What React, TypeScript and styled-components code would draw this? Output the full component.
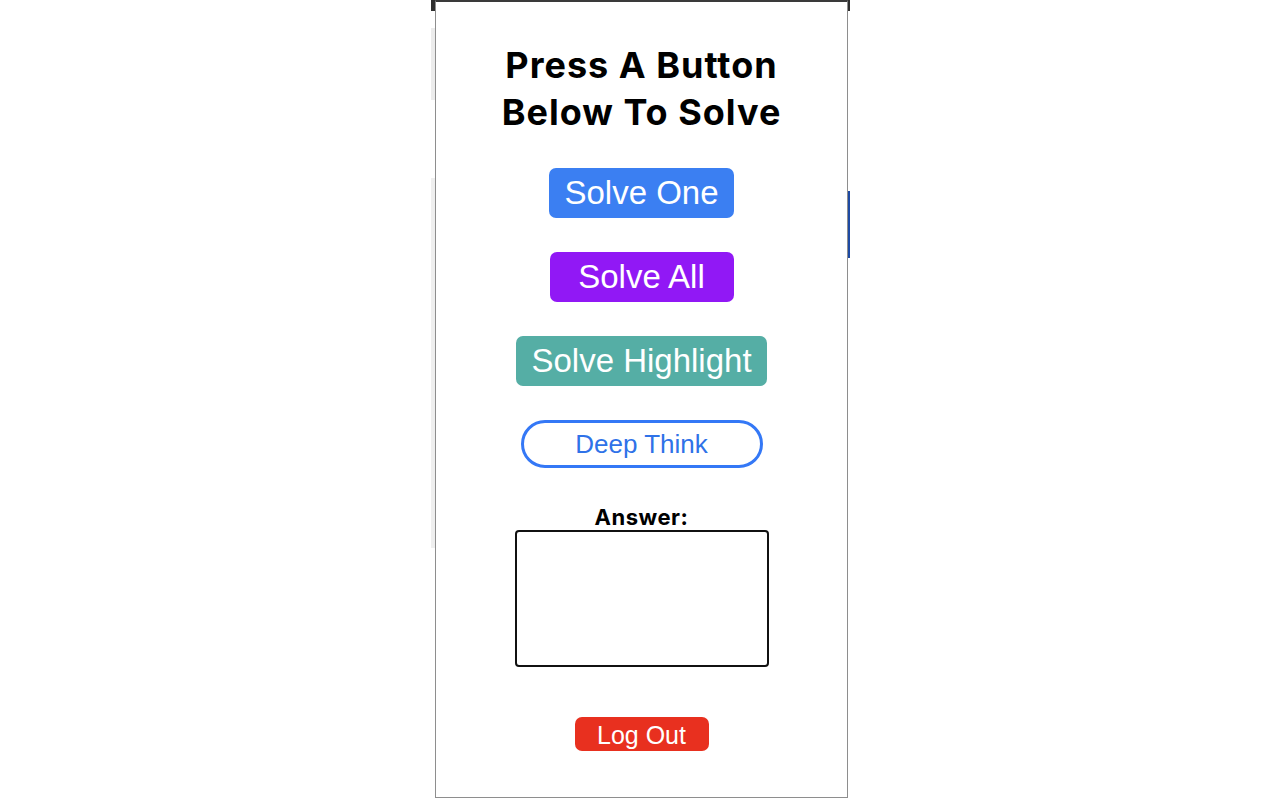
import styled, { createGlobalStyle } from 'styled-components';

const GlobalStyle = createGlobalStyle`
  html, body {
    margin: 0;
    padding: 0;
    background: #ffffff;
  }
  * {
    box-sizing: border-box;
  }
`;

const Stage = styled.div`
  display: flex;
  width: 1280px;
  height: 800px;
  padding-left: 431px;
  overflow: hidden;
`;

// bits of the page behind the popup that show at its edges
const LeftEdge = styled.div`
  width: 4px;
  height: 800px;
  background: linear-gradient(
    to bottom,
    #2e2e2e 0 11px,
    #ffffff 11px 28px,
    #ececec 28px 100px,
    #ffffff 100px 178px,
    #efefef 178px 548px,
    #ffffff 548px
  );
`;

const RightEdge = styled.div`
  width: 2px;
  height: 800px;
  background: linear-gradient(
    to bottom,
    #2e2e2e 0 11px,
    #ffffff 11px 191px,
    #1d4aa3 191px 258px,
    #ffffff 258px
  );
`;

const Panel = styled.section`
  width: 413px;
  height: 798px;
  display: flex;
  flex-direction: column;
  align-items: center;
  border: 1px solid #8e8e8e;
  border-top: 2px solid #3a3a3a;
  background: #ffffff;
`;

const Title = styled.h1`
  margin: 40px 0 0;
  font-family: Inter, 'Liberation Sans', sans-serif;
  font-weight: 700;
  font-size: 36px;
  line-height: 47px;
  letter-spacing: 1px;
  text-align: center;
  color: #000000;
`;

const ButtonStack = styled.div`
  margin-top: 32px;
  display: flex;
  flex-direction: column;
  align-items: center;
  gap: 34px;
`;

const SolveButton = styled.button<{ $color: string }>`
  height: 50px;
  min-width: 184px;
  padding: 0 15px;
  border: none;
  border-radius: 7px;
  background: ${({ $color }) => $color};
  color: #ffffff;
  font-family: 'Liberation Sans', Arial, sans-serif;
  font-size: 33px;
  line-height: 50px;
  cursor: pointer;
`;

const OutlineButton = styled.button`
  width: 242px;
  height: 48px;
  border: 3px solid #3478f6;
  border-radius: 24px;
  background: #ffffff;
  color: #2f72e8;
  font-family: 'Liberation Sans', Arial, sans-serif;
  font-size: 26px;
  line-height: 40px;
  cursor: pointer;
`;

const AnswerLabel = styled.label`
  margin-top: 36px;
  font-family: Inter, 'Liberation Sans', sans-serif;
  font-weight: 700;
  font-size: 22px;
  line-height: 26px;
  letter-spacing: 0.5px;
  color: #000000;
`;

const AnswerBox = styled.textarea`
  width: 254px;
  height: 137px;
  border: 2px solid #111111;
  border-radius: 4px;
  resize: none;
  font-family: 'Liberation Sans', Arial, sans-serif;
  font-size: 14px;
  outline: none;
`;

const LogOutButton = styled.button`
  margin-top: 50px;
  width: 134px;
  height: 34px;
  border: none;
  border-radius: 7px;
  background: #e8301f;
  color: #ffffff;
  font-family: 'Liberation Sans', Arial, sans-serif;
  font-size: 25px;
  line-height: 34px;
  cursor: pointer;
`;

const App = () => (
  <>
    <GlobalStyle />
    <Stage>
      <LeftEdge />
      <Panel>
        <Title>
          Press A Button
          <br />
          Below To Solve
        </Title>
        <ButtonStack>
          <SolveButton $color="#3b7ff2">Solve One</SolveButton>
          <SolveButton $color="#9118f5">Solve All</SolveButton>
          <SolveButton $color="#55aea5">Solve Highlight</SolveButton>
          <OutlineButton>Deep Think</OutlineButton>
        </ButtonStack>
        <AnswerLabel htmlFor="answer">Answer:</AnswerLabel>
        <AnswerBox id="answer" readOnly />
        <LogOutButton>Log Out</LogOutButton>
      </Panel>
      <RightEdge />
    </Stage>
  </>
);

export default App;
